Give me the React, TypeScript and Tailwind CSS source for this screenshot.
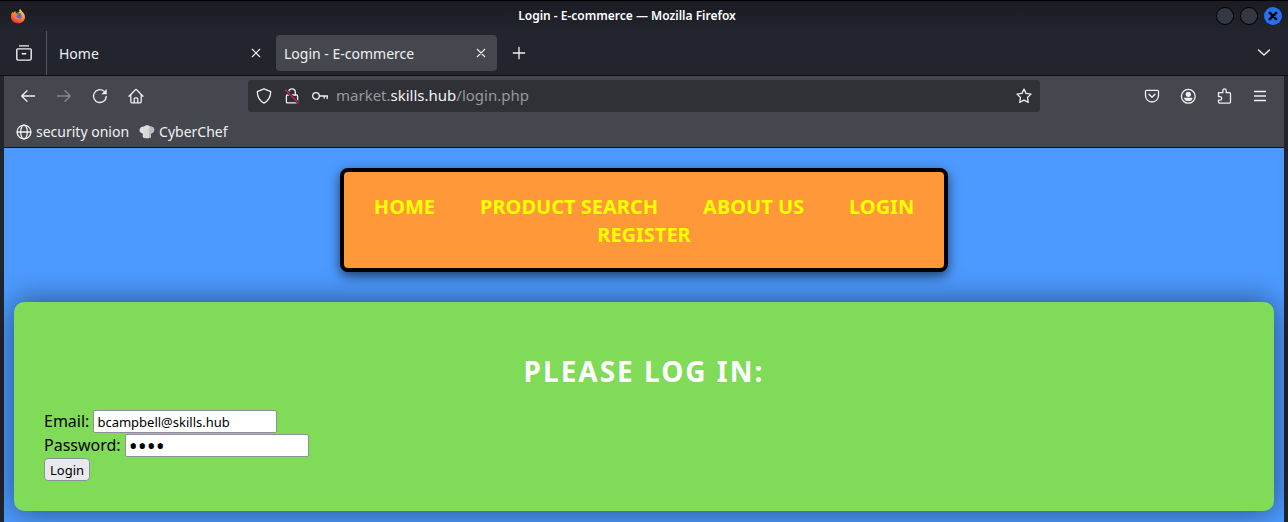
import { useState, type ReactNode } from "react";

function Icon({ size = 16, children }: { size?: number; children: ReactNode }) {
  return (
    <svg width={size} height={size} viewBox="0 0 16 16" fill="none" stroke="currentColor" strokeWidth="1.3" strokeLinecap="round" strokeLinejoin="round" aria-hidden="true">
      {children}
    </svg>
  );
}

function FirefoxLogo() {
  return (
    <svg width="16" height="16" viewBox="0 0 16 16" aria-hidden="true">
      <defs>
        <linearGradient id="flame" x1="0.8" y1="0" x2="0.3" y2="1">
          <stop offset="0.1" stopColor="#ffd54a" />
          <stop offset="0.5" stopColor="#ff8a2a" />
          <stop offset="1" stopColor="#f02a4e" />
        </linearGradient>
      </defs>
      <path d="M10 .9c1.300 1 1.600 1.900 1.900 2.700C14 5.200 15 7 15 9c0 3.700-3.100 6.300-7 6.300S1 12.500 1 8.800c0-2 .5-3.700 1.600-5 .1.700.3 1 .6 1.200.6-.9 1.500-1.500 2.500-1.700-.3.700-.2 1.200.1 1.600.8.300 2.700-.2 3.700-.8C9 3 9.100 1.800 10 .9Z" fill="url(#flame)" />
      <circle cx="8.300" cy="8" r="3.300" fill="#4a6de0" />
      <path d="M2.500 5.800c1.500-.6 2.800-.4 3.800.3l1.900.3c-.2.900-1.600 1-1.900 1.800.6 2 2.600 2.300 4.200 1.600-1 2.300-6.200 2.500-6.800-1.300Z" fill="#ff7a30" />
    </svg>
  );
}

const icons = {
  view: (
    <Icon>
      <path d="M3.500.9h9M1.700 3.900h12.600c.5 0 .9.400.9.900v8.700c0 .9-.7 1.600-1.600 1.600H2.400c-.9 0-1.600-.7-1.600-1.600V4.800c0-.5.400-.9.900-.9ZM6.300 8.700h3.400" strokeWidth="1.400" />
    </Icon>
  ),
  close: (
    <Icon size={10}>
      <path d="m2 2 12 12M14 2 2 14" strokeWidth="1.800" />
    </Icon>
  ),
  plus: (
    <Icon size={14}>
      <path d="M8 1.500v13M1.500 8h13" strokeWidth="1.500" />
    </Icon>
  ),
  chevron: (
    <Icon>
      <path d="m2.500 5 5.500 5 5.500-5" strokeWidth="1.400" />
    </Icon>
  ),
  back: (
    <Icon>
      <path d="M14.500 8H1.800m5.200-5.200L1.700 8 7 13.200" />
    </Icon>
  ),
  forward: (
    <Icon>
      <path d="M1.500 8h12.700M9 2.800 14.300 8 9 13.200" />
    </Icon>
  ),
  reload: (
    <Icon>
      <path d="M14.300 8.400A6.400 6.400 0 1 1 11.900 3.100" />
      <path d="M14.700 1v5.300H9.400Z" fill="currentColor" stroke="none" />
    </Icon>
  ),
  home: (
    <Icon>
      <path d="M1 8.200 7.400 1.700c.4-.4.800-.4 1.200 0L15 8.200M2.800 6.600v7.200c0 .6.4 1 1 1h8.400c.6 0 1-.4 1-1V6.600M6.200 14.500v-3.600c0-.6.4-1 1-1h1.600c.6 0 1 .4 1 1v3.600" />
    </Icon>
  ),
  shield: (
    <Icon>
      <path d="M8 .9 14.200 3.300c.4.200.5.400.5.800-.1 5-2 8.600-6.700 11-4.700-2.400-6.600-6-6.700-11 0-.4.100-.6.500-.8Z" />
    </Icon>
  ),
  lock: (
    <Icon>
      <path d="M4.700 7V4.200a3.300 3.300 0 0 1 6.600 0V7M3.300 7h9.400c.5 0 .9.400.9.900v6c0 .5-.4.900-.9.900H3.300c-.5 0-.9-.4-.9-.9v-6c0-.5.4-.9.900-.9Z" />
      <path d="m1.500 2 13 13" stroke="#2f3136" strokeWidth="3" />
      <path d="m1.500 2 13 13" stroke="#e0164c" />
    </Icon>
  ),
  key: (
    <Icon>
      <circle cx="4" cy="8" r="3.300" />
      <path d="M7.500 8h8M12.200 8.200v2M15.200 8.200v2.300" />
    </Icon>
  ),
  star: (
    <Icon>
      <path d="m8 1.100 2.100 4.300 4.900.7-3.500 3.400.8 4.900L8 12.200l-4.300 2.200.8-4.900L1 6.100l4.900-.7Z" />
    </Icon>
  ),
  pocket: (
    <Icon>
      <path d="M2.500 2.300h11c.6 0 1 .4 1 1v4.200a6.500 6.500 0 0 1-13 0V3.300c0-.6.400-1 1-1ZM5 6.300l3 2.900 3-2.900" />
    </Icon>
  ),
  account: (
    <Icon>
      <circle cx="8.300" cy="8.300" r="6.900" />
      <circle cx="8.300" cy="6.300" r="2.600" fill="currentColor" stroke="none" />
      <path d="M4 9.700h8.600c0 2-1.900 3.400-4.300 3.400S4 11.700 4 9.700Z" fill="currentColor" stroke="none" />
    </Icon>
  ),
  extensions: (
    <Icon>
      <path d="M2.500 4.700h4.300V2.500a1.700 1.700 0 0 1 3.400 0v2.200h3.300c.6 0 1 .4 1 1v8.400c0 .6-.4 1-1 1H3.500c-.6 0-1-.4-1-1v-2H4a1.650 1.650 0 0 0 0-3.400H2.500Z" />
    </Icon>
  ),
  menu: (
    <Icon>
      <path d="M2.500 3.500h11M2.500 8h11M2.500 12.500h11" />
    </Icon>
  ),
  globe: (
    <Icon>
      <circle cx="8" cy="8" r="6.900" />
      <ellipse cx="8" cy="8" rx="3.300" ry="6.900" />
      <path d="M1.200 8h13.600" />
    </Icon>
  ),
};

function ChefHat() {
  return (
    <svg width="16" height="16" viewBox="0 0 16 16" aria-hidden="true">
      <path d="M3.800 9.500C.7 9 0 6.500.9 4.700 1.700 3 3.700 2.300 5 2.700 6.500.8 9.500.8 11 2.500c2-.3 4 .8 4.200 2.800.2 2-1.200 3.800-3.200 4.200v3.800c-1.500 1.300-6.500 1.300-8.200 0Z" fill="#dedede" />
      <path d="M6.200 6v7.800M8.600 5v9" stroke="#cacaca" strokeWidth=".7" />
      <path d="M11 2.500c2-.3 4 .8 4.200 2.800.2 2-1.200 3.800-3.200 4.200v3.800l-2 .7V4Z" fill="#bcbcbc" />
    </svg>
  );
}

function IconButton({ label, dim, children }: { label: string; dim?: boolean; children: ReactNode }) {
  return (
    <button type="button" aria-label={label} disabled={dim} className="flex size-8 shrink-0 items-center justify-center disabled:text-[#85878c]">
      {children}
    </button>
  );
}

function TitleBar() {
  return (
    <header className="flex h-[31px] items-center border-t border-black bg-linear-to-b from-[#1a1b23] to-[#22252e] px-1">
      <div className="flex flex-1 pl-1.5">
        <FirefoxLogo />
      </div>
      <h1 className="text-xs font-semibold text-white">Login - E-commerce — Mozilla Firefox</h1>
      <div className="flex flex-1 justify-end gap-1.5 pl-10">
        <button type="button" aria-label="Minimize" className="size-[18px] rounded-full border border-black bg-[#343843]" />
        <button type="button" aria-label="Maximize" className="size-[18px] rounded-full border border-black bg-[#343843]" />
        <button type="button" aria-label="Close window" className="mr-0.5 flex size-[18px] items-center justify-center rounded-full bg-[#2670f4] text-black">
          <Icon size={10}>
            <path d="m3 3 10 10M13 3 3 13" strokeWidth="4" />
          </Icon>
        </button>
      </div>
    </header>
  );
}

function Tab({ title, active }: { title: string; active?: boolean }) {
  return (
    <div className={active ? "flex h-9 w-[221px] items-center justify-between rounded bg-[#45474e] pr-1.5 pl-2" : "flex h-9 w-[221px] items-center justify-between rounded pr-1.5 pl-2"}>
      <button type="button" className="truncate pt-0.5">{title}</button>
      <button type="button" aria-label={"Close " + title} className="flex size-5 items-center justify-center">
        {icons.close}
      </button>
    </div>
  );
}

function TabBar() {
  return (
    <nav aria-label="Tabs" className="flex h-[45px] items-center border-b border-[#0e0f14] px-1">
      <div className="flex items-center self-stretch border-r border-[#55575e] pr-1.5 pl-1">
        <IconButton label="Recent browsing">{icons.view}</IconButton>
      </div>
      <div className="flex items-center gap-1 pl-1">
        <Tab title="Home" />
        <Tab title="Login - E-commerce" active />
      </div>
      <div className="ml-1.5">
        <IconButton label="New tab">{icons.plus}</IconButton>
      </div>
      <div className="ml-auto pr-1">
        <IconButton label="List all tabs">{icons.chevron}</IconButton>
      </div>
    </nav>
  );
}

function Toolbar() {
  return (
    <div className="flex h-10 items-center px-2">
      <div className="flex gap-1">
        <IconButton label="Back">{icons.back}</IconButton>
        <IconButton label="Forward" dim>{icons.forward}</IconButton>
        <IconButton label="Reload">{icons.reload}</IconButton>
        <IconButton label="Home">{icons.home}</IconButton>
      </div>
      <div className="mr-24 ml-24 flex h-8 flex-1 items-center gap-3 rounded bg-[#2f3136] px-2">
        {icons.shield}
        {icons.lock}
        {icons.key}
        <p className="-ml-1 flex-1 text-[15px] text-[#97989c]">
          market.<span className="text-[#f5f5f5]">skills.hub</span>/login.php
        </p>
        <button type="button" aria-label="Bookmark this page">{icons.star}</button>
      </div>
      <div className="flex gap-1">
        <IconButton label="Save to Pocket">{icons.pocket}</IconButton>
        <IconButton label="Account">{icons.account}</IconButton>
        <IconButton label="Extensions">{icons.extensions}</IconButton>
        <IconButton label="Open application menu">{icons.menu}</IconButton>
      </div>
    </div>
  );
}

function Bookmarks() {
  return (
    <div className="flex h-8 items-center gap-2.5 border-b border-[#0e0f14] px-3">
      <a href="#security-onion" className="flex items-center gap-1">{icons.globe}security onion</a>
      <a href="#cyberchef" className="flex items-center gap-1"><ChefHat />CyberChef</a>
    </div>
  );
}

const links = ["Home", "Product Search", "About Us", "Login", "Register"];

function LoginPage() {
  const [email, setEmail] = useState("bcampbell@skills.hub");
  const [password, setPassword] = useState("demo");
  return (
    <main className="flex-1 bg-[#4c9aff] px-2.5 py-5 text-black">
      <nav aria-label="Shop" className="mx-auto flex max-w-[608px] flex-wrap justify-center gap-x-[45px] rounded-lg border-4 border-black bg-[#fe9839] px-5 pt-[21px] pb-[19px] text-xl leading-7 font-bold text-[#ffff00] uppercase shadow-[0_4px_12px_rgba(0,0,0,0.6)]">
        {links.map((link) => (
          <a key={link} href={"#" + link.toLowerCase().replace(" ", "-")}>{link}</a>
        ))}
      </nav>
      <section className="mt-[30px] rounded-[10px] bg-[#80db58] p-[30px] shadow-[0_0_30px_rgba(0,0,0,0.5)]">
        <h2 className="my-5 text-center text-[28px] leading-[38px] font-bold tracking-[2px] text-white uppercase">Please log in:</h2>
        <form className="text-base" onSubmit={(e) => e.preventDefault()}>
          <div className="flex h-6 items-start gap-1">
            <label htmlFor="email" className="leading-[22px]">Email:</label>
            <input id="email" type="text" value={email} onChange={(e) => setEmail(e.target.value)} className="h-[23px] w-46 rounded-xs border border-[#8f8f9d] bg-white px-[3px] text-[13px] outline-none" />
          </div>
          <div className="flex h-6 items-start gap-1">
            <label htmlFor="password" className="leading-[22px]">Password:</label>
            <input id="password" type="password" value={password} onChange={(e) => setPassword(e.target.value)} className="h-[23px] w-46 rounded-xs border border-[#8f8f9d] bg-white px-[3px] text-2xl leading-5 outline-none" />
          </div>
          <button type="submit" className="block h-[23px] rounded border border-[#8f8f9d] bg-[#e9e9ed] px-[5px] text-[13px] leading-5">Login</button>
        </form>
      </section>
    </main>
  );
}

export default function App() {
  return (
    <div className="flex min-h-screen flex-col bg-[#22252e] font-['Noto_Sans',sans-serif] text-sm text-[#f0f0f2]">
      <TitleBar />
      <TabBar />
      <div className="mx-1 flex flex-1 flex-col bg-[#45474e]">
        <Toolbar />
        <Bookmarks />
        <LoginPage />
      </div>
    </div>
  );
}
